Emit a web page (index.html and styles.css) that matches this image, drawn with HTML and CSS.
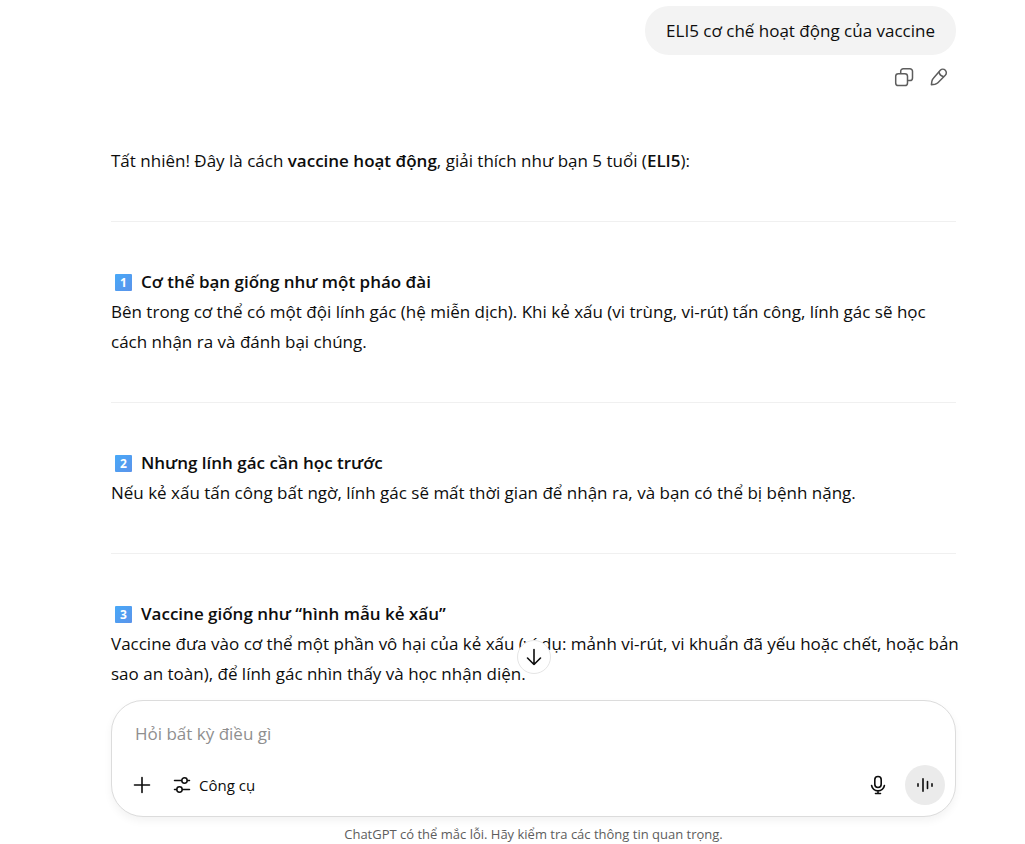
FILE: index.html
```
<!DOCTYPE html>
<html lang="vi">
<head>
    <meta charset="UTF-8">
    <meta name="viewport" content="width=device-width, initial-scale=1.0">
    <title>ChatGPT</title>
    <link rel="stylesheet" href="styles.css">
</head>
<body>
    <main class="thread">
        <div class="user-turn">
            <div class="bubble">ELI5 cơ chế hoạt động của vaccine</div>
            <div class="actions">
                <button type="button" class="icon-btn" aria-label="Sao chép">
                    <svg width="20" height="20" viewBox="0 0 20 20" fill="none" stroke="currentColor" stroke-width="1.5">
                        <rect x="1.700" y="6.700" width="11.800" height="11.800" rx="2.600"/>
                        <path d="M6.700 6.500V4.300a2.600 2.600 0 0 1 2.600-2.600h6.600a2.600 2.600 0 0 1 2.600 2.600v6.600a2.600 2.600 0 0 1-2.600 2.600H13.700"/>
                    </svg>
                </button>
                <button type="button" class="icon-btn" aria-label="Chỉnh sửa">
                    <svg width="20" height="20" viewBox="0 0 20 20" fill="none" stroke="currentColor" stroke-width="1.5" stroke-linejoin="round">
                        <path d="M11.300 3.300a3.500 3.500 0 0 1 5 5l-7.400 7.400c-.8.800-1.800 1.300-2.900 1.500l-3.600.5.500-3.600c.2-1.100.7-2.100 1.500-2.900z"/>
                        <path d="M9.800 4.800c.6 2.500 2.500 4.400 5 5"/>
                    </svg>
                </button>
            </div>
        </div>

        <article class="answer">
            <p>Tất nhiên! Đây là cách <strong>vaccine hoạt động</strong>, giải thích như bạn 5 tuổi (<strong>ELI5</strong>):</p>
            <hr>
            <p><span class="keycap">1</span><strong>Cơ thể bạn giống như một pháo đài</strong><br>
            Bên trong cơ thể có một đội lính gác (hệ miễn dịch). Khi kẻ xấu (vi trùng, vi-rút) tấn công, lính gác sẽ học cách nhận ra và đánh bại chúng.</p>
            <hr>
            <p><span class="keycap">2</span><strong>Nhưng lính gác cần học trước</strong><br>
            Nếu kẻ xấu tấn công bất ngờ, lính gác sẽ mất thời gian để nhận ra, và bạn có thể bị bệnh nặng.</p>
            <hr>
            <p><span class="keycap">3</span><strong>Vaccine giống như “hình mẫu kẻ xấu”</strong><br>
            Vaccine đưa vào cơ thể một phần vô hại của kẻ xấu (ví dụ: mảnh vi-rút, vi khuẩn đã yếu hoặc chết, hoặc bản sao an toàn), để lính gác nhìn thấy và học nhận diện.</p>
        </article>
    </main>

    <footer class="bottom">
        <button type="button" class="scroll-down" aria-label="Cuộn xuống cuối">
            <svg width="18" height="18" viewBox="0 0 18 18" fill="none" stroke="currentColor" stroke-width="1.6" stroke-linecap="round" stroke-linejoin="round">
                <path d="M9 1.500v15M2.500 10L9 16.500 15.500 10"/>
            </svg>
        </button>
        <form class="composer">
            <input type="text" class="prompt" placeholder="Hỏi bất kỳ điều gì" aria-label="Hỏi bất kỳ điều gì">
            <div class="toolbar">
                <button type="button" class="tool-btn" aria-label="Thêm">
                    <svg width="18" height="18" viewBox="0 0 18 18" fill="none" stroke="currentColor" stroke-width="1.600" stroke-linecap="round">
                        <path d="M9 1.500v15M1.500 9h15"/>
                    </svg>
                </button>
                <button type="button" class="tool-btn">
                    <svg width="18" height="18" viewBox="0 0 18 18" fill="none" stroke="currentColor" stroke-width="1.500" stroke-linecap="round">
                        <path d="M1.500 4.500h7M14.500 4.500h2M1.500 13.500h2M9.500 13.500h7"/>
                        <circle cx="11.500" cy="4.500" r="2.700"/>
                        <circle cx="6.500" cy="13.500" r="2.700"/>
                    </svg>
                    Công cụ
                </button>
                <button type="button" class="tool-btn mic" aria-label="Đọc chính tả">
                    <svg width="16" height="20" viewBox="0 0 16 20" fill="none" stroke="currentColor" stroke-width="1.600" stroke-linecap="round">
                        <rect x="4.800" y="1.500" width="6.400" height="11" rx="3.200"/>
                        <path d="M1.600 10.500a6.500 6.500 0 0 0 12.800 0M8 16v2.500M5.500 18.500h5"/>
                    </svg>
                </button>
                <button type="button" class="voice" aria-label="Chế độ thoại">
                    <svg width="18" height="18" viewBox="0 0 18 18" fill="none" stroke="currentColor" stroke-width="1.600" stroke-linecap="round">
                        <path d="M2 7.800v2.400M7 2.800v12.400M11.500 5.500v7M16 7.800v2.400"/>
                    </svg>
                </button>
            </div>
        </form>
        <p class="note">ChatGPT có thể mắc lỗi. Hãy kiểm tra các thông tin quan trọng.</p>
    </footer>
</body>
</html>
```
FILE: styles.css
```
* {
    box-sizing: border-box;
}
body {
    font-family: "Open Sans", "Noto Sans", sans-serif;
    font-size: 17px;
    line-height: 30px;
    margin: 0;
    height: 100vh;
    color: #0d0d0d;
    background-color: #fff;
    display: flex;
    flex-direction: column;
}
button {
    font: inherit;
    color: inherit;
    background: none;
    border: none;
    padding: 0;
    cursor: pointer;
}
svg {
    display: block;
}
.thread {
    flex: 1;
    min-height: 0;
    overflow: hidden;
    padding: 6px 69px 0 111px;
}
.user-turn {
    display: flex;
    flex-direction: column;
    align-items: flex-end;
}
.bubble {
    background-color: #f3f3f3;
    border-radius: 24px;
    padding: 10px 21px 9px;
}
.actions {
    display: flex;
    gap: 15px;
    padding: 12px 7px 0;
    color: #5d5d5d;
}
.answer {
    padding-top: 59px;
}
.answer p {
    margin: 0 -8px 0 0;
}
.answer strong {
    font-weight: 600;
}
.answer hr {
    border: none;
    height: 1px;
    margin: 45px 0;
    background-color: #f0f0f0;
}
.keycap {
    display: inline-block;
    width: 17px;
    height: 17px;
    margin: 0 9px 0 4px;
    border-radius: 1px;
    background: linear-gradient(135deg, #48a9f8, #5b93ea);
    color: #fff;
    font-size: 12px;
    font-weight: 700;
    line-height: 17px;
    text-align: center;
    vertical-align: 1px;
}
.bottom {
    position: relative;
    padding: 0 69px 0 111px;
}
.scroll-down {
    position: absolute;
    top: -60px;
    left: calc(50% + 21px);
    margin-left: -17px;
    width: 34px;
    height: 34px;
    display: flex;
    align-items: center;
    justify-content: center;
    border: 1px solid #e5e5e5;
    border-radius: 50%;
    background-color: #fff;
}
.composer {
    border: 1px solid #dcdcdc;
    border-radius: 32px;
    padding: 18px 10px 11px 21px;
    background-color: #fff;
    box-shadow: 0 4px 8px rgba(0, 0, 0, 0.05);
}
.prompt {
    display: block;
    width: 100%;
    height: 30px;
    padding: 0 2px;
    border: none;
    outline: none;
    background: none;
    font: inherit;
    color: inherit;
}
.prompt::placeholder {
    color: #8f8f8f;
    opacity: 1;
}
.toolbar {
    display: flex;
    align-items: center;
    gap: 22px;
    margin-top: 16px;
}
.tool-btn {
    display: flex;
    align-items: center;
    gap: 8px;
    font-size: 15px;
}
.mic {
    margin-left: auto;
}
.voice {
    display: flex;
    align-items: center;
    justify-content: center;
    width: 40px;
    height: 40px;
    border-radius: 50%;
    background-color: #ebebeb;
    margin-left: -3px;
}
.note {
    margin: 0;
    padding: 7px 0 0;
    font-size: 13px;
    line-height: 20px;
    text-align: center;
    color: #5d5d5d;
}
```
